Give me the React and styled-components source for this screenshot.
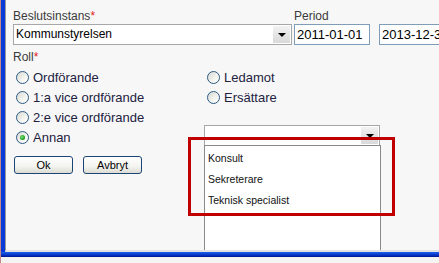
import React from 'react'
import styled, { createGlobalStyle } from 'styled-components'

const GlobalStyle = createGlobalStyle`
  html, body { margin: 0; padding: 0; background: #f3f3f3; }
  body { font-family: "Liberation Sans", Arial, sans-serif; }
`;

const Screen = styled.div`
  position: relative;
  width: 439px;
  height: 263px;
  overflow: hidden;
  box-sizing: border-box;
  background: #f4f4f2;
  border-left: 1px solid #c88a8a;
`;

const Frame = styled.div`
  display: flex;
  flex-direction: column;
  height: 257px;
`;

const Body = styled.div`
  flex: 1;
  display: flex;
  min-height: 0;
  border-left: 4px solid #0a3ad8;
`;

const BottomBar = styled.div`
  height: 5px;
  background: linear-gradient(180deg, #1a62ea 0%, #0a3ccf 50%, #00168f 100%);
`;

const Panel = styled.div`
  position: relative;
  flex: 1;
  min-width: 0;
  overflow: hidden;
  background: #f7f7f7;
  border-left: 1px solid #9a9a9a;
  border-bottom: 2px solid #e2e2e2;
  padding: 9px 0 0 7px;
`;

const FieldRow = styled.div`
  display: flex;
  gap: 2px;
`;

const Field = styled.div`
  display: flex;
  flex-direction: column;
  flex-shrink: 0;
`;

const Label = styled.div`
  height: 15px;
  font-size: 12px;
  line-height: 15px;
  color: #3a3a3a;
  margin-top: ${({ spaced }) => (spaced ? '5px' : '0')};
`;

const Required = styled.span`
  color: #e02020;
  font-size: 12px;
`;

const Select = styled.div`
  position: relative;
  display: flex;
  box-sizing: border-box;
  width: ${({ w }) => w}px;
  height: 21px;
  padding: 1px;
  background: #fff;
  border: 1px solid #a7a7a7;
`;

const SelectValue = styled.div`
  flex: 1;
  padding-left: 1px;
  font-size: 12px;
  line-height: 17px;
  color: #000;
`;

const ArrowBox = styled.div`
  width: 17px;
  display: flex;
  align-items: center;
  justify-content: center;
  background: linear-gradient(180deg, #f2f2f2 0%, #d9d9d9 100%);
  &::after {
    content: "";
    border-left: 4px solid transparent;
    border-right: 4px solid transparent;
    border-top: 4px solid #000;
  }
`;

const DateRow = styled.div`
  display: flex;
  gap: 9px;
`;

const DateInput = styled.div`
  flex-shrink: 0;
  box-sizing: border-box;
  width: 76px;
  height: 21px;
  padding-left: 2px;
  background: #fff;
  border: 1px solid #7f9db9;
  font-size: 13px;
  line-height: 19px;
  color: #000;
  white-space: nowrap;
  overflow: hidden;
`;

const RadioGrid = styled.div`
  display: grid;
  grid-template-columns: 191px 1fr;
  grid-auto-rows: 20px;
  margin-top: 2px;
`;

const RadioRow = styled.label`
  display: flex;
  align-items: center;
  gap: 4px;
  padding-left: 3px;
  font-size: 13px;
  color: #22223f;
`;

const RadioCircle = styled.span`
  position: relative;
  box-sizing: border-box;
  width: 13px;
  height: 13px;
  border-radius: 50%;
  border: 1px solid #2a5985;
  background: linear-gradient(135deg, #d9d9d2 0%, #f4f4f0 60%, #ffffff 100%);
  ${({ checked }) => checked && `
    &::after {
      content: "";
      position: absolute;
      left: 3px;
      top: 3px;
      width: 5px;
      height: 5px;
      border-radius: 50%;
      background: radial-gradient(circle at 40% 40%, #7be07b 0%, #21a121 60%, #0e7a0e 100%);
    }
  `}
`;

const RoleSelectCell = styled.div`
  align-self: start;
  margin-top: -2px;
`;

const DropList = styled.div`
  position: absolute;
  left: -1px;
  top: 19px;
  width: 177px;
  height: 120px;
  box-sizing: border-box;
  padding-top: 2px;
  background: #fff;
  border: 1px solid #8a8a8a;
`;

const DropItem = styled.div`
  height: 21px;
  padding-left: 3px;
  font-size: 10.5px;
  line-height: 21px;
  color: #111;
`;

const ButtonRow = styled.div`
  display: flex;
  gap: 10px;
  margin-top: 9px;
  padding-left: 1px;
`;

const Button = styled.button`
  box-sizing: border-box;
  width: 59px;
  height: 18px;
  padding: 0;
  border: 1px solid #1c4577;
  border-radius: 3px;
  background: linear-gradient(180deg, #ffffff 0%, #f3f3ef 60%, #dcdcd4 100%);
  font-family: "Liberation Sans", Arial, sans-serif;
  font-size: 11px;
  line-height: 16px;
  color: #000;
`;

const Highlight = styled.div`
  position: absolute;
  left: 187px;
  top: 137px;
  width: 207px;
  height: 79px;
  box-sizing: border-box;
  border: 3px solid #c00000;
  pointer-events: none;
`;

const Radio = ({ checked, children }) => (
  <RadioRow>
    <RadioCircle checked={checked} />
    {children}
  </RadioRow>
)

const App = () => {
  const others = ['Konsult', 'Sekreterare', 'Teknisk specialist']
  return (
    <>
      <GlobalStyle />
      <Screen>
        <Frame>
          <Body>
            <Panel>
              <FieldRow>
                <Field>
                  <Label>Beslutsinstans<Required>*</Required></Label>
                  <Select w={279}>
                    <SelectValue>Kommunstyrelsen</SelectValue>
                    <ArrowBox />
                  </Select>
                </Field>
                <Field>
                  <Label>Period</Label>
                  <DateRow>
                    <DateInput>2011-01-01</DateInput>
                    <DateInput>2013-12-31</DateInput>
                  </DateRow>
                </Field>
              </FieldRow>

              <Label spaced>Roll<Required>*</Required></Label>
              <RadioGrid>
                <Radio>Ordförande</Radio>
                <Radio>Ledamot</Radio>
                <Radio>1:a vice ordförande</Radio>
                <Radio>Ersättare</Radio>
                <Radio>2:e vice ordförande</Radio>
                <div />
                <Radio checked>Annan</Radio>
                <RoleSelectCell>
                  <Select w={176}>
                    <SelectValue />
                    <ArrowBox />
                    <DropList>
                      {others.map((o) => (
                        <DropItem key={o}>{o}</DropItem>
                      ))}
                    </DropList>
                  </Select>
                </RoleSelectCell>
              </RadioGrid>

              <ButtonRow>
                <Button>Ok</Button>
                <Button>Avbryt</Button>
              </ButtonRow>
            </Panel>
          </Body>
          <BottomBar />
        </Frame>
        <Highlight />
      </Screen>
    </>
  )
}

export default App
